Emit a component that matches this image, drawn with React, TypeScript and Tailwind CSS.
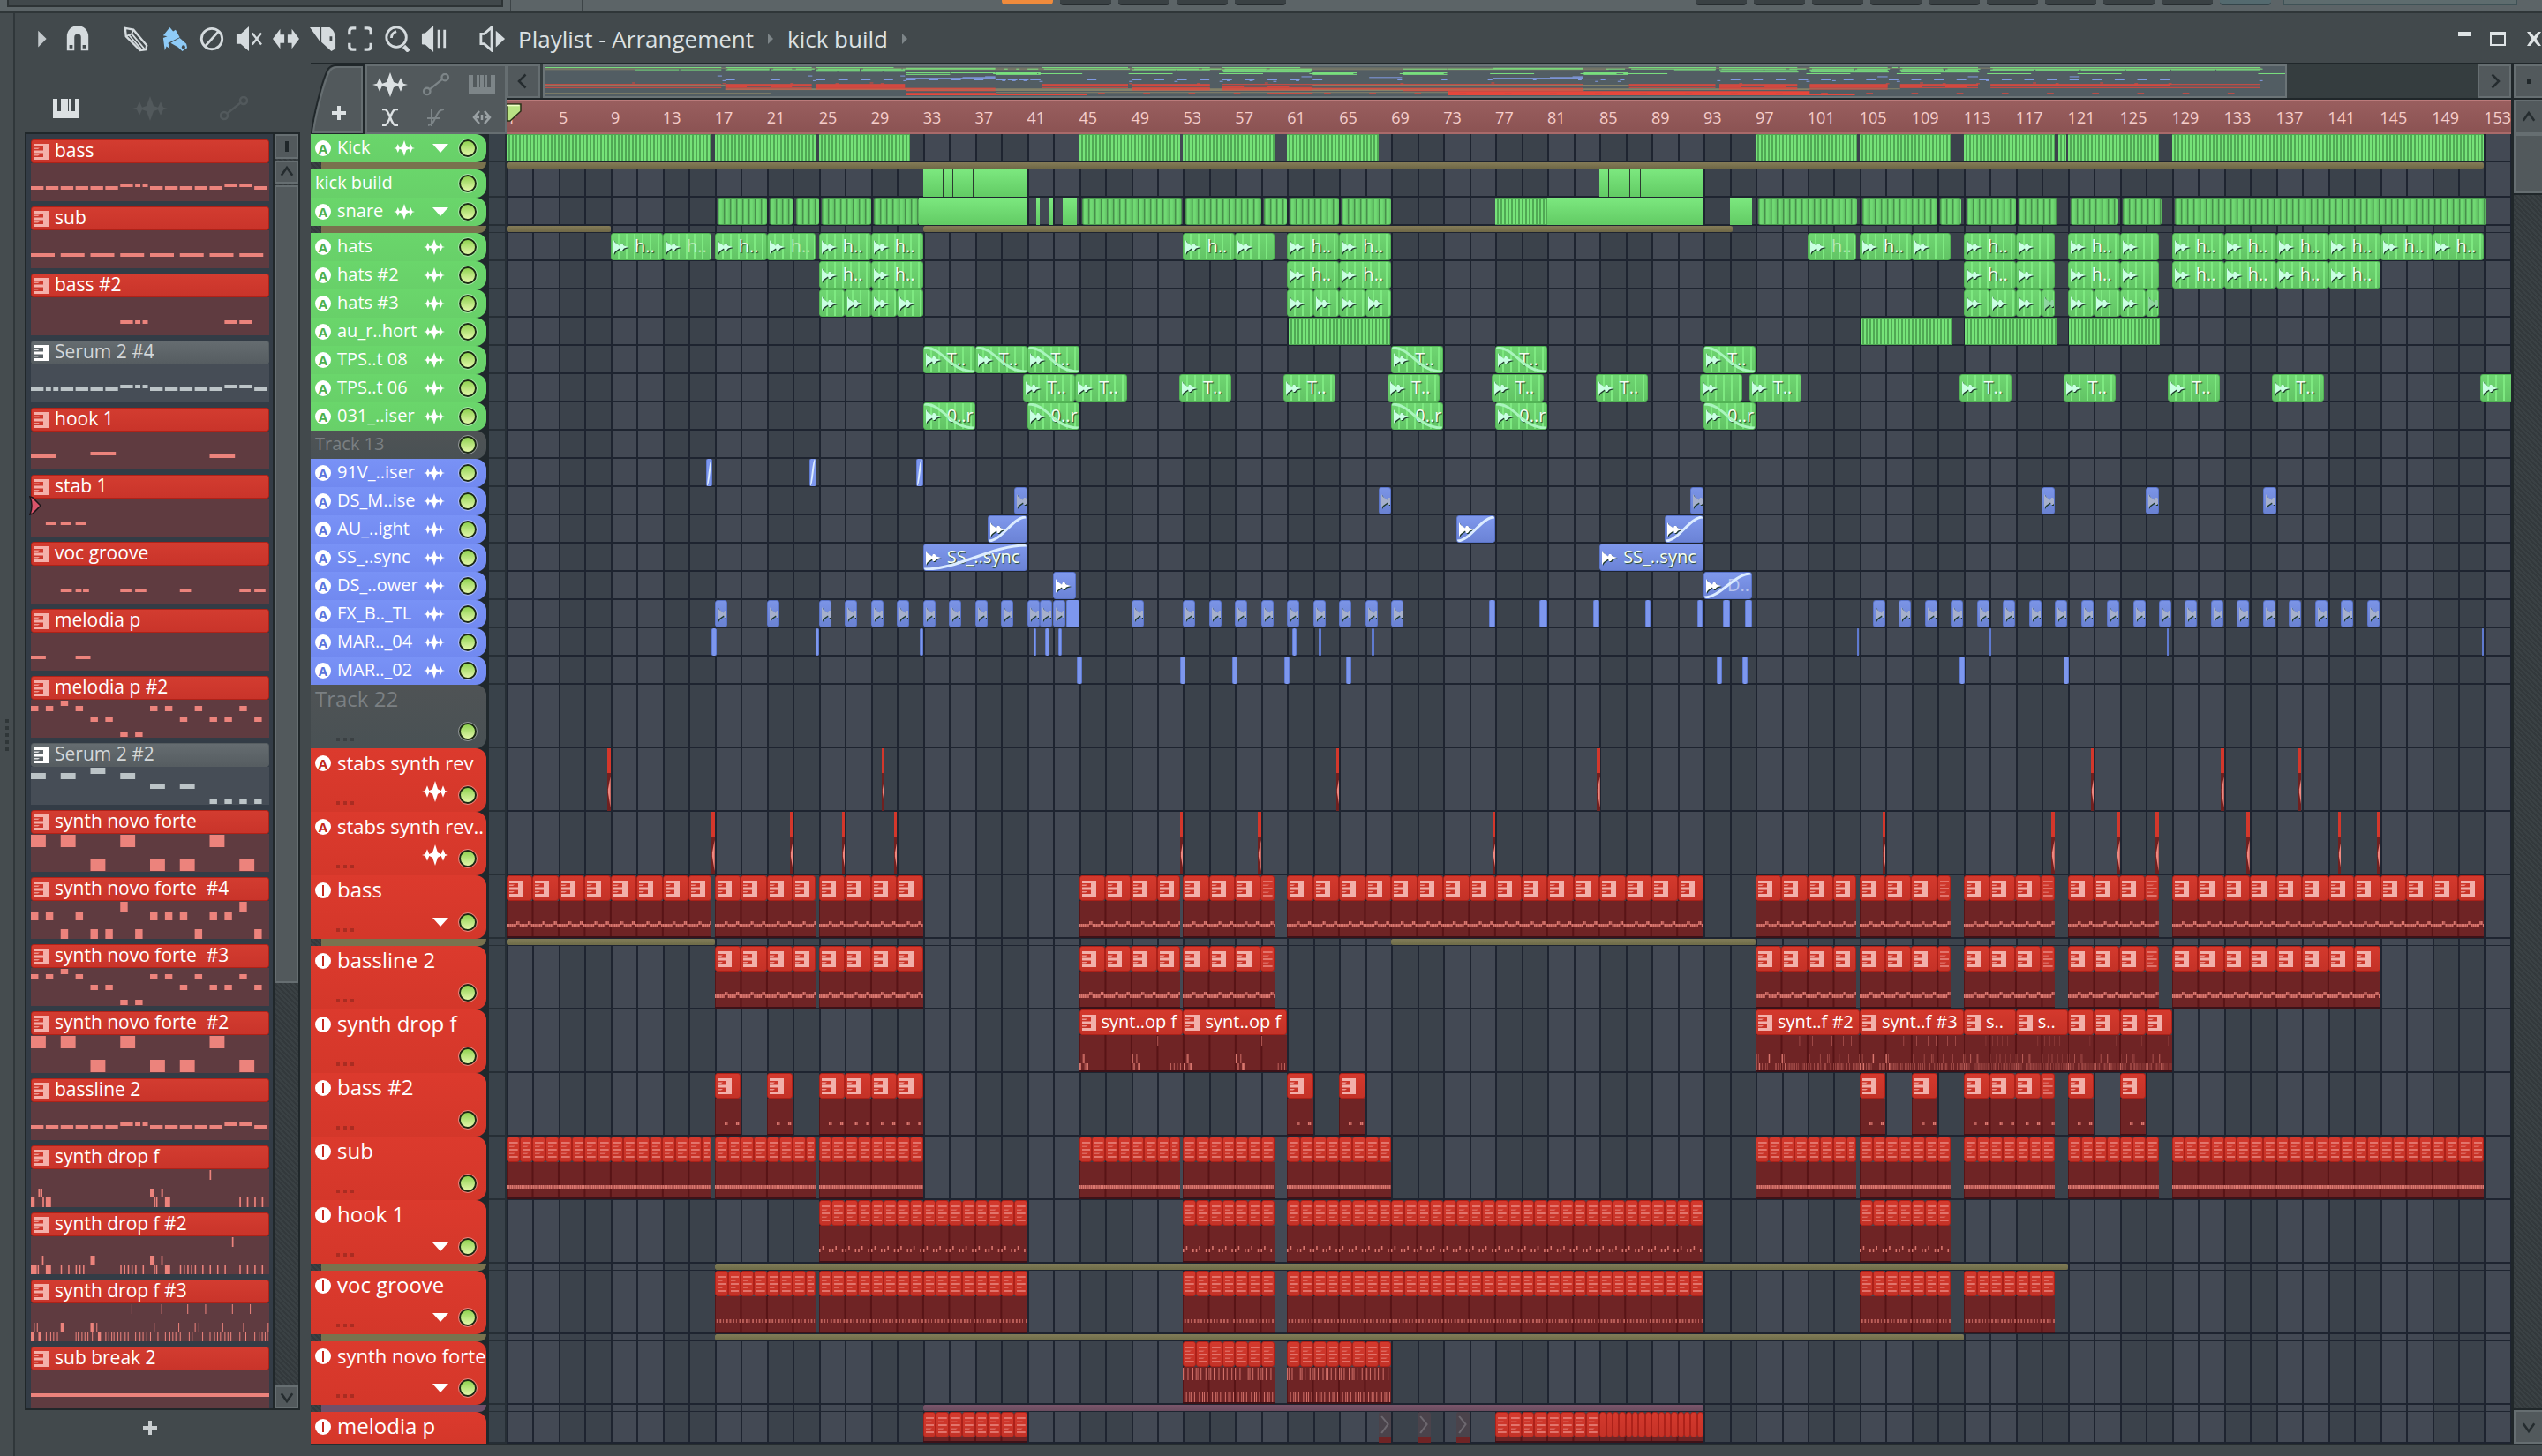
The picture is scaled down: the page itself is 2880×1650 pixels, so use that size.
import React from 'react';
import clsx from 'clsx';

// Number of bars that fit in the visible part of the arrangement
const BARS = 154.07;

type Note = [x: number, y: number, w: number, h: number];
type Range = [from: number, to: number];
type Hue = 'green' | 'blue' | 'red' | 'grey';

interface AudioClip {
  from: number;
  to: number;
  style: 'wave' | 'stripe' | 'hit' | 'solid' | 'slim' | 'short';
  label?: string;
  dim?: boolean;
  fade?: 'in' | 'out';
  cuts?: number[];
}

interface PatternRuns {
  unit: number;
  notes: Note[];
  runs: Range[];
  labels?: string[];
}

interface Automation {
  hue: 'khaki' | 'olive' | 'plum';
  runs: Range[];
}

interface Track {
  name: string;
  hue: Hue;
  type?: 'audio' | 'instrument';
  tall?: boolean;
  cut?: boolean;
  folder?: boolean;
  audio?: AudioClip[];
  slivers?: Range[];
  patterns?: PatternRuns[];
  muted?: number[];
  automation?: Automation;
}

/* ---------- note data ---------- */

const notes = (xs: number[], y: number, w: number, h: number): Note[] => xs.map((x) => [x, y, w, h]);

const BASS: Note[] = [
  ...notes([0, 1, 2, 3, 4, 5, 8, 9, 10, 11, 12, 15], 26, 0.85, 4),
  ...notes([6, 13, 14], 23, 0.85, 4),
  ...notes([7, 7.5], 23, 0.35, 4),
];
const SERUM_4: Note[] = [
  ...notes([0, 2, 3, 4, 5, 8, 9, 10, 11, 12, 15], 26, 0.85, 4),
  ...notes([1, 1.5], 26, 0.35, 4),
  ...notes([6, 13, 14], 23, 0.85, 4),
  ...notes([7, 7.5], 23, 0.35, 4),
];
const SUB: Note[] = notes([0, 2, 4, 6, 8, 10, 12, 14], 26, 1.6, 4);
const BASS_2: Note[] = [...notes([6, 13, 14], 26, 0.85, 4), ...notes([7, 7.5], 26, 0.35, 4)];
const HOOK: Note[] = [[0, 26, 1.7, 4], [4, 23, 1.7, 4], [12, 26, 1.7, 4]];
const STAB: Note[] = notes([1, 2, 3], 26, 0.7, 4);
const VOC: Note[] = [...notes([2, 6, 7, 10, 14, 15], 26, 0.75, 4), ...notes([3, 3.5], 26, 0.4, 4)];
const MELODIA: Note[] = notes([0, 3], 26, 1, 4);
const MELODIA_2: Note[] = [
  ...notes([2], 1, 0.5, 6),
  ...notes([0, 1, 3, 8, 9, 11, 14], 7, 0.5, 6),
  ...notes([4, 5, 10, 12, 13, 15], 19, 0.5, 6),
  ...notes([6, 7], 36, 0.5, 6),
];
const SERUM_2: Note[] = [
  ...notes([4], 1, 1, 7),
  ...notes([0, 2, 6], 7, 1, 7),
  ...notes([8, 10], 19, 1, 6),
  ...notes([12, 13, 14, 15], 36, 0.5, 6),
];
const NOVO: Note[] = [...notes([0, 2, 6, 12], 1, 1, 14), ...notes([4, 8, 10, 14], 28, 1, 14)];
const NOVO_4: Note[] = [
  ...notes([6, 14], 1, 0.5, 11),
  ...notes([0, 1, 3, 8, 9, 10, 12, 13], 12, 0.5, 10),
  ...notes([2, 4, 5, 7, 11, 15], 32, 0.5, 11),
];
const DROP: Note[] = [
  ...notes([12], 1, 0.1, 11),
  ...notes([0.5, 0.65, 8.75], 22, 0.12, 10),
  ...notes([8], 22, 0.25, 10),
  ...notes([0], 32, 0.25, 11),
  ...notes([1, 9], 32, 0.35, 11),
  ...notes([0.78, 8.25, 8.4, 14, 14.5, 15, 15.5], 32, 0.1, 11),
];
const DROP_2: Note[] = [
  ...notes([13.5], 1, 0.1, 11),
  ...notes([0.75, 8.75], 22, 0.1, 10),
  ...notes([4, 8], 22, 0.3, 10),
  ...notes([0, 1, 9], 32, 0.35, 11),
  ...notes([0.3, 0.45, 2, 2.5, 3, 3.25, 3.5, 6, 6.25, 6.5, 6.75, 7, 7.5, 8.25, 8.4, 10, 10.25, 10.5, 10.75, 11, 11.5, 12, 12.5, 13, 14, 14.5, 15, 15.5], 32, 0.09, 11),
];
const DROP_3: Note[] = [
  ...notes([6.75, 8.75, 10.5, 11.7, 13.5, 14.7], 1, 0.06, 11),
  ...notes([0.2, 0.4, 4.4, 8.25, 9.9, 11, 11.25, 12.85, 14.25, 15.9], 22, 0.06, 10),
  ...notes([2, 4], 22, 0.2, 10),
  ...notes([0, 0.5, 4.5], 32, 0.2, 11),
  ...notes([1, 1.3, 1.5, 1.75, 3, 3.15, 3.4, 3.6, 3.8, 4.1, 5, 5.2, 5.4, 5.55, 5.8, 6, 6.3, 6.5, 7, 7.3, 7.5, 7.75, 8, 8.5, 9, 9.3, 9.5, 9.7, 10, 10.6, 10.8, 11.5, 12, 12.3, 12.5, 12.7, 13, 13.2, 13.4, 14, 14.4, 15, 15.3, 15.5, 15.7, 15.85], 32, 0.06, 11),
];
const SUB_BREAK: Note[] = [[0, 26, 16, 4]];

const PICKER: { name: string; notes: Note[]; plain?: boolean; marker?: boolean }[] = [
  { name: 'bass', notes: BASS },
  { name: 'sub', notes: SUB },
  { name: 'bass #2', notes: BASS_2 },
  { name: 'Serum 2 #4', notes: SERUM_4, plain: true },
  { name: 'hook 1', notes: HOOK },
  { name: 'stab 1', notes: STAB, marker: true },
  { name: 'voc groove', notes: VOC },
  { name: 'melodia p', notes: MELODIA },
  { name: 'melodia p #2', notes: MELODIA_2 },
  { name: 'Serum 2 #2', notes: SERUM_2, plain: true },
  { name: 'synth novo forte', notes: NOVO },
  { name: 'synth novo forte  #4', notes: NOVO_4 },
  { name: 'synth novo forte  #3', notes: MELODIA_2 },
  { name: 'synth novo forte  #2', notes: NOVO },
  { name: 'bassline 2', notes: BASS },
  { name: 'synth drop f', notes: DROP },
  { name: 'synth drop f #2', notes: DROP_2 },
  { name: 'synth drop f #3', notes: DROP_3 },
  { name: 'sub break 2', notes: SUB_BREAK },
];

/* ---------- track data ---------- */

const clips = (style: AudioClip['style'], ranges: Range[], extra: Partial<AudioClip> = {}): AudioClip[] =>
  ranges.map(([from, to]) => ({ from, to, style, ...extra }));

const every = (starts: number[], length: number): Range[] => starts.map((s) => [s, s + length]);

const steps = (from: number, to: number, step: number): number[] => {
  const out: number[] = [];
  for (let b = from; b <= to; b += step) out.push(b);
  return out;
};

const TRACKS: Track[] = [
  {
    name: 'Kick',
    hue: 'green',
    type: 'audio',
    folder: true,
    audio: clips('stripe', [[1, 16.75], [17, 24.75], [25, 32], [45, 52.75], [53, 60], [61, 68], [97, 104.8], [105, 112], [113, 120], [120.3, 120.9], [121, 128], [129, 153]]),
    automation: { hue: 'khaki', runs: [[1, 153]] },
  },
  {
    name: 'kick build',
    hue: 'green',
    audio: [
      { from: 33, to: 41, style: 'solid', cuts: [34.5, 35.25, 36.8] },
      { from: 85, to: 93, style: 'solid', cuts: [85.7, 87.3, 88.1] },
    ],
  },
  {
    name: 'snare',
    hue: 'green',
    type: 'audio',
    folder: true,
    audio: [
      ...clips('hit', [[17.2, 21], [21.25, 23], [23.25, 25], [25.2, 29], [29.2, 32.7], [45.2, 52.9], [53.2, 59], [59.2, 61], [61.2, 65], [65.2, 69], [97.2, 104.8], [105.2, 111], [111.2, 112.8], [113.2, 117], [117.2, 120.2], [121.2, 124.9], [125.2, 128.2], [129.2, 153.2]]),
      ...clips('stripe', [[77, 81]]),
      ...clips('solid', [[32.7, 41], [41.7, 42], [42.75, 43], [43.75, 44.8], [81, 93], [95, 96.75]]),
    ],
    automation: { hue: 'khaki', runs: [[1, 9], [33, 95.2]] },
  },
  {
    name: 'hats',
    hue: 'green',
    type: 'audio',
    audio: [
      ...clips('wave', every([9, 17, 25, 29, 53, 61, 65, 105, 113, 121, ...steps(129, 149, 4)], 4), { label: 'h..' }),
      ...clips('wave', [[13, 16.75], [21, 24.75], [101, 104.75]], { label: 'h..', dim: true }),
      ...clips('wave', every([57, 109, 117, 125], 3)),
    ],
  },
  {
    name: 'hats #2',
    hue: 'green',
    type: 'audio',
    audio: [
      ...clips('wave', every([25, 29, 61, 65, 113, 121, ...steps(129, 141, 4)], 4), { label: 'h..' }),
      ...clips('wave', every([117, 125], 3)),
    ],
  },
  {
    name: 'hats #3',
    hue: 'green',
    type: 'audio',
    audio: [
      ...clips('wave', every([25, 27, 29, 31, 61, 63, 65, 67, 113, 115, 117, 121, 123, 125], 2)),
      ...clips('short', [[119, 120], [127, 128]]),
    ],
  },
  {
    name: 'au_r..hort',
    hue: 'green',
    type: 'audio',
    audio: clips('stripe', [[61.1, 68.9], [105.1, 112.1], [113.1, 120.1], [121.1, 128.1]]),
  },
  {
    name: 'TPS..t 08',
    hue: 'green',
    type: 'audio',
    audio: clips('wave', every([33, 37, 41, 69, 77, 93], 4), { label: 'T..', fade: 'out' }),
  },
  {
    name: 'TPS..t 06',
    hue: 'green',
    type: 'audio',
    audio: [
      ...clips('wave', every([40.7, 44.7, 52.7, 60.7, 68.7, 76.7, 84.7, 96.5, 112.7, 120.7, 128.7, 136.7], 4), { label: 'T..' }),
      ...clips('wave', [[92.7, 96], [152.7, 156]]),
    ],
  },
  {
    name: '031_..iser',
    hue: 'green',
    type: 'audio',
    audio: clips('wave', every([33, 41, 69, 77, 93], 4), { label: '0..r', fade: 'out' }),
  },
  { name: 'Track 13', hue: 'grey' },
  {
    name: '91V_..iser',
    hue: 'blue',
    type: 'audio',
    audio: clips('slim', [[16.3, 16.8], [24.3, 24.8], [32.5, 33]], { fade: 'in' }),
  },
  {
    name: 'DS_M..ise',
    hue: 'blue',
    type: 'audio',
    audio: clips('short', every([40, 68, 92, 119, 127, 136], 1)),
  },
  {
    name: 'AU_..ight',
    hue: 'blue',
    type: 'audio',
    audio: clips('wave', every([38, 74, 90], 3), { fade: 'in' }),
  },
  {
    name: 'SS_..sync',
    hue: 'blue',
    type: 'audio',
    audio: [
      { from: 33, to: 41, style: 'wave', label: 'SS_..sync', fade: 'in' },
      { from: 85, to: 93, style: 'wave', label: 'SS_..sync' },
    ],
  },
  {
    name: 'DS_..ower',
    hue: 'blue',
    type: 'audio',
    audio: [
      { from: 43, to: 44.75, style: 'wave' },
      { from: 93, to: 96.7, style: 'wave', label: 'D..', dim: true, fade: 'in' },
    ],
  },
  {
    name: 'FX_B.._TL',
    hue: 'blue',
    type: 'audio',
    audio: [
      ...clips('short', every([17, 21, 25, 27, 29, 31, 33, 35, 37, 39, 41, 42, 43, 49, ...steps(53, 69, 2), ...steps(106, 144, 2)], 0.95)),
      ...clips('slim', [[44, 45], [76.5, 77], [80.4, 81], [84.5, 85], [88.5, 88.9], [92.5, 92.9], [94.5, 95], [96.2, 96.7]]),
    ],
  },
  {
    name: 'MAR.._04',
    hue: 'blue',
    type: 'audio',
    audio: clips('slim', [[16.75, 17.15], [24.75, 25], [32.75, 33], [41.5, 41.7], [42.4, 42.7], [43.4, 43.7], [61.4, 61.7], [63.4, 63.6], [67.5, 67.7], [104.8, 104.9], [115, 115.1], [128.6, 128.7], [152.8, 152.9]]),
  },
  {
    name: 'MAR.._02',
    hue: 'blue',
    type: 'audio',
    audio: clips('slim', every([44.8, 52.75, 56.75, 60.75, 65.5, 94, 96, 112.7, 120.7], 0.4)),
  },
  { name: 'Track 22', hue: 'grey', tall: true },
  {
    name: 'stabs synth rev',
    hue: 'red',
    type: 'audio',
    tall: true,
    slivers: every([8.75, 29.8, 64.75, 84.8, 122.75, 132.75, 138.7], 0.25),
  },
  {
    name: 'stabs synth rev..',
    hue: 'red',
    type: 'audio',
    tall: true,
    slivers: every([16.75, 22.75, 26.75, 30.75, 52.75, 58.75, 76.75, 106.75, 119.75, 124.75, 127.75, 134.75, 141.75, 144.75], 0.25),
  },
  {
    name: 'bass',
    hue: 'red',
    type: 'instrument',
    tall: true,
    folder: true,
    patterns: [{ unit: 2, notes: BASS, runs: [[1, 16.75], [17, 24.75], [25, 33], [45, 52.75], [53, 60], [61, 93], [97, 104.75], [105, 112], [113, 120], [121, 128], [129, 153]] }],
    automation: { hue: 'olive', runs: [[1, 17], [69, 97]] },
  },
  {
    name: 'bassline 2',
    hue: 'red',
    type: 'instrument',
    tall: true,
    patterns: [{ unit: 2, notes: BASS, runs: [[17, 24.75], [25, 33], [45, 52.75], [53, 60], [97, 104.75], [105, 112], [113, 120], [121, 128], [129, 145]] }],
  },
  {
    name: 'synth drop f',
    hue: 'red',
    type: 'instrument',
    tall: true,
    patterns: [
      { unit: 8, notes: DROP, runs: [[45, 61]], labels: ['synt..op f', 'synt..op f'] },
      { unit: 8, notes: DROP_3, runs: [[97, 113]], labels: ['synt..f #2', 'synt..f #3'] },
      { unit: 4, notes: DROP_3, runs: [[113, 121]], labels: ['s..', 's..'] },
      { unit: 2, notes: DROP_2, runs: [[121, 129]] },
    ],
  },
  {
    name: 'bass #2',
    hue: 'red',
    type: 'instrument',
    tall: true,
    patterns: [{ unit: 2, notes: BASS_2, runs: [[17, 19], [21, 23], [25, 33], [61, 63], [65, 67], [105, 107], [109, 111], [113, 120], [121, 123], [125, 127]] }],
  },
  {
    name: 'sub',
    hue: 'red',
    type: 'instrument',
    tall: true,
    patterns: [{ unit: 1, notes: SUB, runs: [[1, 16.75], [17, 24.75], [25, 33], [45, 52.75], [53, 60], [61, 69], [97, 104.75], [105, 112], [113, 120], [121, 128], [129, 153]] }],
  },
  {
    name: 'hook 1',
    hue: 'red',
    type: 'instrument',
    tall: true,
    folder: true,
    patterns: [{ unit: 1, notes: HOOK, runs: [[25, 41], [53, 60], [61, 93], [105, 112]] }],
    automation: { hue: 'olive', runs: [[17, 121]] },
  },
  {
    name: 'voc groove',
    hue: 'red',
    type: 'instrument',
    tall: true,
    folder: true,
    patterns: [{ unit: 1, notes: VOC, runs: [[17, 24.75], [25, 41], [53, 60], [61, 93], [105, 112], [113, 120]] }],
    automation: { hue: 'olive', runs: [[17, 113]] },
  },
  {
    name: 'synth novo forte',
    hue: 'red',
    type: 'instrument',
    tall: true,
    folder: true,
    patterns: [{ unit: 1, notes: NOVO, runs: [[53, 60], [61, 69]] }],
    automation: { hue: 'plum', runs: [[33, 93]] },
  },
  {
    name: 'melodia p',
    hue: 'red',
    type: 'instrument',
    tall: true,
    cut: true,
    patterns: [
      { unit: 1, notes: MELODIA, runs: [[33, 41], [77, 85]] },
      { unit: 0.5, notes: MELODIA, runs: [[85, 93]] },
    ],
    muted: [68, 71, 74],
  },
];

const left = (bar: number) => `${((bar - 1) / BARS) * 100}%`;
const width = (from: number, to: number) => `${((to - from) / BARS) * 100}%`;

/* ---------- icons ---------- */

const WAVE = 'M0 18 5 16.5 8 8 11 16.5 16 14 20 0 24 14 29 16.5 32 8 35 16.5 40 18 35 19.5 32 28 29 19.5 24 22 20 36 16 22 11 19.5 8 28 5 19.5Z';

function WaveIcon({ className }: { className?: string }) {
  return (
    <svg viewBox="0 0 40 36" preserveAspectRatio="none" className={className} fill="currentColor">
      <path d={WAVE} />
    </svg>
  );
}

function LinkIcon({ className }: { className?: string }) {
  return (
    <svg viewBox="0 0 32 28" className={className} fill="none" stroke="currentColor" strokeWidth="2.5">
      <circle cx="5" cy="22" r="4" />
      <circle cx="27" cy="5" r="4" />
      <path d="M8.5 19.5 23.5 7.5" />
    </svg>
  );
}

function PianoIcon({ className }: { className?: string }) {
  return (
    <svg viewBox="0 0 30 22" preserveAspectRatio="none" className={className} fill="currentColor">
      <path d="M0 0h5v14h4V0h3v14h1V0h4v14h1V0h3v14h4V0h5v22H0Z" />
    </svg>
  );
}

function KeysIcon({ className }: { className?: string }) {
  return (
    <svg viewBox="0 0 16 18" className={className} fill="currentColor">
      <path d="M0 0h16v18H0v-3h10v-4.5H0v-3h10V3H0Z" />
      <path d="M0 4.5h6l-2 1.500H0ZM0 12h6l-2 1.500H0Z" opacity="0.8" />
    </svg>
  );
}

function NarrowKeysIcon() {
  return (
    <svg viewBox="0 0 10 18" preserveAspectRatio="none" className="h-[18px] w-full pl-[2px] pr-px" fill="#e98a82">
      <path d="M0 0h10v2H0ZM0 8h10v2H0ZM0 16h10v2H0Z" opacity="0.75" />
      <path d="M0 4.5h7l-2 1.5H0ZM0 12.5h7l-2 1.5H0Z" opacity="0.6" />
    </svg>
  );
}

function SampleIcon({ className }: { className?: string }) {
  return (
    <svg viewBox="0 0 17 16" className={className} fill="currentColor">
      <path d="M0 0 2 3 7 6.5 8 4 10 4 12 6.5 17 8 12 9.5 10 12 8 12 7 9.5 2 13 0 16Z" />
    </svg>
  );
}

function ChevronIcon({ d }: { d: string }) {
  return (
    <svg viewBox="0 0 16 16" className="size-5" fill="none" stroke="#252c2f" strokeWidth="2">
      <path d={d} />
    </svg>
  );
}

const UP = 'M3 11 8 4l5 7';
const DOWN = 'M3 5l5 7 5-7';

const TOOLS: { name: string; at: string; art: React.ReactNode }[] = [
  { name: 'Menu', at: 'w-9', art: <path d="M12 6 22 16 12 26Z" fill="#c3c9cc" /> },
  { name: 'Snap', at: 'w-[46px]', art: <path d="M3 30V13a13 13 0 0 1 26 0v17h-9V14a4 4 0 0 0-8 0v16ZM6 23.500v4h4v-4Zm16 0v4h4v-4Z" fill="#d5dbde" fillRule="evenodd" /> },
  { name: 'Draw', at: 'ml-5 w-[46px]', art: <g fill="none" stroke="#d5dbde" strokeWidth="2.500"><path d="M3 3 13 5 29 24 28 29 21 30 4 13Z" /><path d="M4 13 11 10 13 5M11 10 26 28M8 12 22 28" strokeWidth="2" /></g> },
  { name: 'Paint', at: 'w-[42px]', art: <g fill="#8ecbf7"><path d="M10 2 14 7 17 5 22 14 8 21 10 28 6 25 4 30 2 15 7 13 2 12Z" /><path d="M22 15 11 21 20 26 25 31 31 27 30 22Z" /><circle cx="26.500" cy="26" r="2.200" fill="#42494c" /></g> },
  { name: 'Delete', at: 'w-[42px]', art: <g fill="none" stroke="#d5dbde" strokeWidth="3"><circle cx="16" cy="16" r="12.500" /><path d="M8 25 24 7" /></g> },
  { name: 'Mute', at: 'w-[42px]', art: <g fill="#d5dbde"><path d="M1 10h5L16 1v30L6 22H1Z" /><path d="M20 9 31 23M31 9 20 23" stroke="#d5dbde" strokeWidth="2.500" /></g> },
  { name: 'Slip', at: 'w-[42px]', art: <path d="M0 16 9 4v7h5v10H9v7ZM32 16 23 4v7h-5v10h5v7Z" fill="#d5dbde" /> },
  { name: 'Slice', at: 'w-[42px]', art: <path d="M0 2h12v17ZM14 2h10q7 5 7 13v13l-5 3-12-11ZM24 13v5h3v-5Z" fill="#d5dbde" fillRule="evenodd" /> },
  { name: 'Select', at: 'w-[42px]', art: <path d="M3 11V7q0-4 4-4h4M21 3h4q4 0 4 4v4M29 21v4q0 4-4 4h-4M11 29H7q-4 0-4-4v-4" fill="none" stroke="#d5dbde" strokeWidth="3.500" /> },
  { name: 'Zoom', at: 'w-[42px]', art: <g fill="none" stroke="#d5dbde"><circle cx="15" cy="14" r="12" strokeWidth="3" /><path d="M9 15q0-6 6-8" strokeWidth="3" /><path d="M24 25 30 31" strokeWidth="5" /></g> },
  { name: 'Playback', at: 'w-[42px]', art: <g fill="#d5dbde"><path d="M1 10q0-1 4-1L15 0v32L5 23q-4 0-4-1Z" /><path d="M20 5h3v22h-3ZM27 5h3v22h-3Z" /></g> },
  { name: 'Options', at: 'ml-5 w-[50px]', art: <g fill="#d5dbde"><path d="M2 10h4L15 2v28L6 22H2Z" fill="none" stroke="#d5dbde" strokeWidth="3" /><path d="M20 6 31 16 20 26Z" /></g> },
];

/* ---------- window chrome ---------- */

function ToolbarStrip() {
  return (
    <div className="flex h-[15px] items-start overflow-hidden border-b-2 border-[#2f3638] bg-[#5c6467]">
      <div className="ml-2 h-2 w-[562px] border-2 border-t-0 border-[#2d3335] bg-[#41484b]" />
      <div className="ml-2 h-full w-px bg-[#3d4447]" />
      <div className="ml-20 h-full w-px bg-[#3d4447]" />
      <div className="flex-1" />
      <div className="flex gap-2">
        <div className="h-[5px] w-[58px] rounded-b bg-[#f08b3c]" />
        {[1, 2, 3, 4].map((i) => (
          <div key={i} className="h-[6px] w-[58px] rounded-b border-b-2 border-[#272d30] bg-[#3a4144]" />
        ))}
      </div>
      <div className="ml-[455px] h-full w-px bg-[#3d4447]" />
      <div className="ml-2 flex gap-2">
        {[1, 2, 3, 4, 5, 6, 7, 8, 9].map((i) => (
          <div key={i} className="h-[6px] w-[58px] rounded-b border-b-2 border-[#272d30] bg-[#3a4144]" />
        ))}
        <div className="h-[6px] w-[58px] rounded-b border-b-2 border-[#34454a] bg-[#546a6f]" />
      </div>
      <div className="ml-1 h-full w-px bg-[#3d4447]" />
      <div className="ml-2 mr-7 h-[6px] w-[266px] border-2 border-t-0 border-[#3f5256] bg-[#5e6c6e]" />
    </div>
  );
}

function TitleBar() {
  return (
    <header className="flex h-14 items-center pl-3 pt-[2px]">
      <nav className="flex items-center">
        {TOOLS.map((tool) => (
          <button key={tool.name} aria-label={tool.name} className={clsx('flex justify-center', tool.at)}>
            <svg viewBox="0 0 32 32" className="size-[30px]">
              {tool.art}
            </svg>
          </button>
        ))}
      </nav>
      <h1 className="ml-1 flex items-center gap-4 text-[26px] leading-8 text-[#dce1e3]">
        <span>Playlist - Arrangement</span>
        <span className="h-0 w-0 border-y-[6px] border-l-[6px] border-y-transparent border-l-[#7d8588]" />
        <span>kick build</span>
        <span className="h-0 w-0 border-y-[6px] border-l-[6px] border-y-transparent border-l-[#7d8588]" />
      </h1>
      <div className="ml-auto flex h-4 items-start gap-[22px] overflow-hidden">
        <button aria-label="Minimize" className="h-[5px] w-[14px] bg-[#dfe4e6]" />
        <button aria-label="Maximize" className="h-4 w-[18px] border-2 border-t-4 border-[#dfe4e6]" />
        <button aria-label="Close" className="-mr-px h-4 w-5">
          <svg viewBox="0 0 20 18" className="h-4 w-5">
            <path d="M1 0h4l5 6 5-6h4l-6 9 6 9h-4l-5-6-5 6H1l6-9Z" fill="#dfe4e6" />
          </svg>
        </button>
      </div>
    </header>
  );
}

/* ---------- picker ---------- */

const notesPath = (list: Note[], repeat: number) => {
  let d = '';
  for (let r = 0; r < repeat; r++) {
    for (const [x, y, w, h] of list) d += `M${x + r * 16} ${y}h${w}v${h}h${-w}Z`;
  }
  return d;
};

function PickerItem({ name, notes: list, plain, marker }: (typeof PICKER)[number]) {
  return (
    <li className="relative h-[70px]">
      <button
        className={clsx(
          'flex h-[27px] w-full items-center gap-[7px] whitespace-pre rounded-[3px] border pb-[3px] pl-[3px] text-left text-[21px] leading-6',
          plain
            ? 'border-[#565d61] bg-gradient-to-b from-[#656c70] to-[#565d61] text-[#d3d7d9]'
            : 'border-[#b02218] bg-gradient-to-b from-[#d33c30] to-[#c9342a] text-white'
        )}
      >
        <KeysIcon className={clsx('mt-[3px] h-[18px] w-4', plain ? 'text-white' : 'text-[#f4b0aa]')} />
        <span>{name}</span>
      </button>
      <svg
        viewBox="0 0 16 43"
        preserveAspectRatio="none"
        className={clsx('h-[43px] w-full', plain ? 'bg-[#464d56] text-[#bcc4c7]' : 'bg-[#5f3b40] text-[#ec837c]')}
      >
        <path d={notesPath(list, 1)} fill="currentColor" />
      </svg>
      {marker && (
        <svg viewBox="0 0 14 22" className="absolute -left-[2px] top-6 h-[22px] w-[14px]">
          <path d="M1 1q4 10 0 20L4 20 13 11 4 2Z" fill="#d9546a" stroke="#1c1519" strokeWidth="1.500" />
        </svg>
      )}
    </li>
  );
}

const HATCH = 'bg-[repeating-linear-gradient(45deg,#33393c_0_2px,#3a4144_2px_4px)]';

function Picker() {
  return (
    <aside className="flex w-[335px] flex-col pl-[11px]">
      <div className="flex h-[79px] items-center pb-0 pl-3 pt-6 text-[#52595c]">
        <button aria-label="Patterns" className="flex w-[70px] justify-center text-[#dce1e3]">
          <PianoIcon className="h-[22px] w-[30px]" />
        </button>
        <button aria-label="Audio clips" className="flex w-[120px] justify-center">
          <WaveIcon className="h-7 w-10" />
        </button>
        <button aria-label="Automation clips" className="flex w-[70px] justify-center">
          <LinkIcon className="h-7 w-8" />
        </button>
      </div>
      <div className="flex w-[312px] border-2 border-[#20272a] bg-[#333c46]">
        <ul className="flex flex-1 flex-col gap-[6px] pl-[5px] pr-1 pt-[6px]">
          {PICKER.map((item) => (
            <PickerItem key={item.name} {...item} />
          ))}
        </ul>
        <div className={clsx('flex w-[29px] flex-col gap-[2px] border-l-2 border-[#20272a]', HATCH)}>
          <button aria-label="Picker size" className="flex h-7 items-center justify-center border-2 border-[#666e71] bg-[#52595c]">
            <span className="h-3 w-1 bg-[#20272a]" />
          </button>
          <button aria-label="Scroll up" className="flex h-[26px] items-center justify-center border-2 border-[#666e71] bg-[#52595c]">
            <ChevronIcon d={UP} />
          </button>
          <div className="h-[904px] border-2 border-[#666e71] bg-[#52595c]" />
          <button aria-label="Scroll down" className="mt-auto flex h-[26px] items-center justify-center border-2 border-[#666e71] bg-[#52595c]">
            <ChevronIcon d={DOWN} />
          </button>
        </div>
      </div>
      <button aria-label="Add pattern" className="mt-3 flex w-[284px] justify-center">
        <svg viewBox="0 0 16 16" className="size-4">
          <path d="M6 0h4v6h6v4h-6v6H6v-6H0V6h6Z" fill="#c9ced0" />
        </svg>
      </button>
    </aside>
  );
}

/* ---------- arrangement header ---------- */

function CornerPanel() {
  return (
    <div className="flex h-full w-[222px] gap-[2px] bg-[#20272a]">
      <button aria-label="Add track" className="relative flex w-[60px] items-end justify-center bg-[#42494c] pb-4">
        <svg viewBox="0 0 60 80" preserveAspectRatio="none" className="absolute inset-0 h-full w-full">
          <path d="M1 80C2 62 14 14 20 5Q23 1 29 1H59V79H1Z" fill="#52595c" stroke="#20272a" strokeWidth="2" />
          <path d="M3 78C5 60 16 16 22 7Q25 3 30 3H58V78Z" fill="none" stroke="#666e71" strokeWidth="2" />
        </svg>
        <svg viewBox="0 0 16 16" className="relative ml-1 size-4">
          <path d="M6 0h4v6h6v4h-6v6H6v-6H0V6h6Z" fill="#dce1e3" />
        </svg>
      </button>
      <div className="grid flex-1 grid-cols-3 place-items-center border-2 border-[#666e71] bg-[#52595c] text-[#7d8588]">
        <button aria-label="Show audio" className="text-[#dce1e3]">
          <WaveIcon className="h-7 w-10" />
        </button>
        <button aria-label="Show automation">
          <LinkIcon className="h-[26px] w-8" />
        </button>
        <button aria-label="Show patterns">
          <PianoIcon className="h-[22px] w-[30px]" />
        </button>
        <button aria-label="Crossfade" className="text-[#dce1e3]">
          <svg viewBox="0 0 20 20" className="size-5" fill="none" stroke="currentColor" strokeWidth="2.500">
            <path d="M1 1h3c5 0 7 18 12 18h3M19 1h-3c-5 0-7 18-12 18H1" />
          </svg>
        </button>
        <button aria-label="Curve">
          <svg viewBox="0 0 20 20" className="size-5" fill="none" stroke="currentColor" strokeWidth="2">
            <path d="M5 0v20M0 11h14M1 19c9 0 8-18 18-18" />
          </svg>
        </button>
        <button aria-label="Stretch" className="text-[#9aa1a4]">
          <svg viewBox="0 0 22 16" className="h-4 w-[22px]" fill="none" stroke="currentColor" strokeWidth="2.500">
            <path d="M8 1 2 8l6 7M14 1l6 7-6 7M4 8h4M14 8h4M11 5v6" />
          </svg>
        </button>
      </div>
    </div>
  );
}

const MAP_FILL: Record<Hue, string> = { green: '#7dea80', blue: '#859fec', red: '#e5473c', grey: '#777777' };

function Minimap() {
  return (
    <svg
      viewBox={`0 0 ${BARS} 36`}
      preserveAspectRatio="none"
      className="h-full w-full border-2 border-[#6b7477] bg-[#525d63]"
    >
      {TRACKS.map((track, i) => {
        const y = 1 + i * 0.93;
        const ranges: Range[] = [
          ...(track.audio ?? []).map((c): Range => [c.from, c.to]),
          ...(track.slivers ?? []),
          ...(track.patterns ?? []).flatMap((p) => p.runs),
        ];
        return (
          <g key={i}>
            {track.automation?.runs.map(([a, b]) => (
              <rect key={a} x={a - 1} y={y + 0.8} width={b - a} height="0.8" fill="#968f6c" />
            ))}
            {ranges.map(([a, b], n) => (
              <rect key={n} x={a - 1} y={y} width={Math.max(b - a - 0.1, 0.3)} height="1" fill={MAP_FILL[track.hue]} />
            ))}
          </g>
        );
      })}
      {/* tracks below the visible area */}
      <path d="M0 32h20v1.500H0ZM60 31h44v1H60ZM40 31h50v1H40Z" fill="#968f6c" opacity="0.8" />
      <path d="M32 32h8v1.500h-8ZM32 34h16v1H32ZM64 32h4v1h-4ZM80 30h32v3H80ZM80 34h32v1H80ZM112 34h4v1h-4Z" fill="#e5473c" />
      {steps(49, 150, 4).map((b) => (
        <rect key={b} x={b} y="32" width="0.6" height="1" fill="#d5493f" />
      ))}
    </svg>
  );
}

function Ruler() {
  return (
    <div className="relative flex h-[39px] items-center overflow-hidden border-b-2 border-t-2 border-b-[#a96a6a] border-t-[#bb7b7b] bg-gradient-to-b from-[#995e5e] to-[#8b5353] text-lg text-[#f6cdca]">
      {steps(1, 153, 4).map((bar) => (
        <span key={bar} className="shrink-0" style={{ width: width(bar, Math.min(bar + 4, BARS + 1)) }}>
          {bar}
        </span>
      ))}
      <svg viewBox="0 0 18 22" className="absolute left-0 top-[2px] h-[22px] w-[18px]">
        <path d="M0 1h16v8L4 20H0Z" fill="#b9e384" stroke="#2a3118" strokeWidth="1.500" />
        <path d="M0 2.500h14.500" stroke="#f1ffc9" strokeWidth="1.500" />
      </svg>
    </div>
  );
}

function ArrangementHeader() {
  return (
    <div className="flex h-[81px] border-t-2 border-[#20272a]">
      <CornerPanel />
      <div className="flex min-w-0 flex-1 flex-col">
        <div className="flex h-10 items-stretch border-b-2 border-[#20272a] bg-[#353d3f]">
          <button aria-label="Scroll left" className="flex w-[38px] items-center justify-center border-2 border-[#666e71] bg-[#52595c]">
            <ChevronIcon d="M10 2 4 8l6 6" />
          </button>
          <div className="ml-[3px] w-[87%]">
            <Minimap />
          </div>
          <button aria-label="Scroll right" className="ml-auto flex w-[38px] items-center justify-center border-2 border-[#666e71] bg-[#52595c]">
            <ChevronIcon d="M6 2l6 6-6 6" />
          </button>
        </div>
        <Ruler />
      </div>
      <div className="flex w-[35px] flex-col gap-[2px] bg-[#20272a] pl-[3px]">
        <button aria-label="Zoom level" className="flex h-[38px] items-center justify-center border-2 border-r-0 border-[#666e71] bg-[#52595c]">
          <span className="h-[6px] w-1 bg-[#20272a]" />
        </button>
        <button aria-label="Scroll up" className="flex flex-1 items-center justify-center border-2 border-r-0 border-[#666e71] bg-[#52595c]">
          <ChevronIcon d={UP} />
        </button>
      </div>
    </div>
  );
}

/* ---------- tracks ---------- */

const HEADER_BG: Record<Hue, string> = {
  green: 'bg-gradient-to-b from-[#6ad66b] to-[#68d069] text-white',
  blue: 'bg-gradient-to-b from-[#7992f6] to-[#7189f0] text-white',
  red: 'bg-gradient-to-b from-[#dc3a2d] to-[#d4372a] text-white',
  grey: 'bg-gradient-to-b from-[#4f5355] to-[#495154] text-[#7b8083]',
};

const BADGE_TEXT: Record<Hue, string> = {
  green: 'text-[#4caf50]',
  blue: 'text-[#5a74dc]',
  red: 'text-[#c2281d]',
  grey: 'text-[#555555]',
};

const LANE_FILL: Record<Automation['hue'], string> = {
  khaki: 'bg-gradient-to-b from-[#857c58] to-[#6f6846]',
  olive: 'bg-gradient-to-b from-[#817c58] to-[#6e6c48]',
  plum: 'bg-gradient-to-b from-[#7b566b] to-[#6b4d60]',
};

// bars: thin line every two, alternate shade every four
const GRID =
  'bg-[repeating-linear-gradient(90deg,#1e2430_0_2px,transparent_2px_1.29811%),repeating-linear-gradient(90deg,#434954_0_2.59622%,#3b424b_2.59622%_5.19244%)]';

function Badge({ track }: { track: Track }) {
  if (!track.type) return null;
  return (
    <span
      className={clsx(
        'flex size-[18px] shrink-0 items-center justify-center rounded-full bg-white text-[15px] font-bold leading-none',
        BADGE_TEXT[track.hue]
      )}
    >
      {track.type === 'audio' ? 'A' : <span className="h-3 w-[2px] bg-current" />}
    </span>
  );
}

function Led({ name }: { name: string }) {
  return (
    <button
      aria-label={`Mute ${name}`}
      className="size-5 shrink-0 rounded-full border-2 border-[#1c2a14] bg-gradient-to-b from-[#8fd24e] to-[#e2f7a8] outline outline-1 outline-white/40"
    />
  );
}

function Fold() {
  return <span className="-mr-1 ml-1 h-0 w-0 border-x-[9px] border-t-[10px] border-x-transparent border-t-white" />;
}

function TrackHeader({ track }: { track: Track }) {
  if (!track.tall) {
    return (
      <div className={clsx('flex h-8 w-[199px] items-center rounded-r-xl pl-[5px] pr-[11px]', HEADER_BG[track.hue])}>
        <Badge track={track} />
        <span className={clsx('whitespace-nowrap pb-[2px] text-xl leading-7', track.type && 'ml-[7px]')}>{track.name}</span>
        <div className="ml-auto flex items-center gap-4">
          {track.type && <WaveIcon className="h-[18px] w-6" />}
          {track.folder && <Fold />}
          <Led name={track.name} />
        </div>
      </div>
    );
  }
  return (
    <div
      className={clsx(
        'w-[199px] overflow-hidden pl-[5px] pr-[11px]',
        track.cut ? 'h-9 rounded-tr-xl' : 'h-[72px] rounded-r-xl',
        HEADER_BG[track.hue]
      )}
    >
      <div className="flex h-[34px] items-center">
        <Badge track={track} />
        <span
          className={clsx(
            'whitespace-nowrap pb-[2px] leading-7',
            track.name.length > 12 ? 'text-[22px]' : 'text-2xl',
            track.type && 'ml-[7px]'
          )}
        >
          {track.name}
        </span>
      </div>
      {!track.cut && (
        <div className="flex h-[38px] items-center gap-4">
          <div className="mb-2 ml-6 mr-auto flex gap-1 self-end">
            {[1, 2, 3].map((i) => (
              <span key={i} className="size-1 bg-black/20" />
            ))}
          </div>
          {track.type === 'audio' && <WaveIcon className="-mr-1 mb-2 h-6 w-[30px]" />}
          {track.folder && <Fold />}
          <Led name={track.name} />
        </div>
      )}
    </div>
  );
}

const CLIP_FILL: Record<'green' | 'blue', Record<AudioClip['style'], string>> = {
  green: {
    wave: 'rounded-[3px] border border-[#52b355] bg-[repeating-linear-gradient(90deg,transparent_0_7px,#7ee981_7px_9px),linear-gradient(#6fd672,#62c465)] text-[#c9ffe2]',
    short: 'rounded-[3px] border border-[#52b355] bg-[repeating-linear-gradient(90deg,transparent_0_5px,#79e47c_5px_7px),linear-gradient(#6fd672,#62c465)] text-[#8fd6a0]',
    stripe: 'border-y border-[#4fa653] bg-[repeating-linear-gradient(90deg,#76e379_0_2px,#50a854_2px_4px)]',
    hit: 'rounded-[3px] border-y border-[#4a9c4e] bg-[repeating-linear-gradient(90deg,#478f4b_0_1px,#70d973_2px_4px,#60c063_7px)]',
    solid: 'bg-gradient-to-b from-[#7ce87f] to-[#62cb64]',
    slim: 'bg-[#6cd66c]',
  },
  blue: {
    wave: 'rounded-[3px] border border-[#5a74c9] bg-gradient-to-b from-[#7f98ec] to-[#6b83d6] text-white',
    short: 'rounded-[3px] border border-[#5a74c9] bg-gradient-to-b from-[#7b94e6] to-[#6a82d2] text-[#a6b0cc]',
    stripe: 'bg-[#7a93e8]',
    hit: 'bg-[#7a93e8]',
    solid: 'bg-[#7a93e8]',
    slim: 'rounded-[2px] border-x border-[#5f7ad0] bg-[#7d97ee]',
  },
};

function FadeCurve({ dir, slim }: { dir: 'in' | 'out'; slim: boolean }) {
  return (
    <svg viewBox="0 0 100 30" preserveAspectRatio="none" className="absolute inset-0 h-full w-full">
      <path
        d={dir === 'in' ? 'M0 29C35 29 65 1 100 1' : 'M0 1C40 1 50 29 100 29'}
        fill="none"
        stroke={dir === 'in' ? '#dcecff' : '#a9f5bd'}
        strokeWidth={slim ? 2 : 3}
        vectorEffect="non-scaling-stroke"
      />
    </svg>
  );
}

function AudioClipView({ clip, hue }: { clip: AudioClip; hue: 'green' | 'blue' }) {
  const hasIcon = clip.style === 'wave' || clip.style === 'short';
  return (
    <div
      className={clsx('absolute inset-y-0 flex items-center gap-[7px] overflow-hidden', hasIcon && 'pl-[2px]', CLIP_FILL[hue][clip.style])}
      style={{ left: left(clip.from), width: width(clip.from, clip.to) }}
    >
      {hasIcon && <SampleIcon className="h-4 w-[17px] shrink-0 drop-shadow-[1px_1px_0_#1f3a2c]" />}
      {clip.label && (
        <span
          className={clsx(
            'whitespace-nowrap pb-[2px] text-xl leading-7',
            clip.dim ? 'text-white/50' : 'text-[#f4fff4] [text-shadow:1px_1px_1px_#27472c]'
          )}
        >
          {clip.label}
        </span>
      )}
      {clip.cuts?.map((bar) => (
        <span
          key={bar}
          className="absolute inset-y-0 w-px bg-[#2c3a30]"
          style={{ left: `${((bar - clip.from) / (clip.to - clip.from)) * 100}%` }}
        />
      ))}
      {clip.fade && <FadeCurve dir={clip.fade} slim={clip.style === 'slim'} />}
    </div>
  );
}

function PatternRun({ run, group }: { run: Range; group: PatternRuns }) {
  const [from, to] = run;
  const cells = steps(from, to - 0.1, group.unit);
  return (
    <div
      className="absolute inset-y-0 flex flex-col overflow-hidden border-b-2 border-[#3c1218]"
      style={{ left: left(from), width: width(from, to) }}
    >
      <div className="flex h-[29px] shrink-0">
        {cells.map((bar, i) => {
          const length = Math.min(group.unit, to - bar);
          return (
            <div
              key={bar}
              className="flex min-w-0 basis-0 items-center gap-[6px] overflow-hidden rounded-[3px] border border-[#ad2119] bg-gradient-to-b from-[#d4392d] to-[#c43227] text-[#f2b0aa]"
              style={{ flexGrow: length }}
            >
              {length > 1 && <KeysIcon className="ml-[2px] h-[18px] w-4 shrink-0" />}
              {length === 1 && <NarrowKeysIcon />}
              {length < 1 && group.unit === 1 && <NarrowKeysIcon />}
              {group.labels && <span className="whitespace-nowrap pb-[2px] text-xl leading-6 text-white">{group.labels[i]}</span>}
            </div>
          );
        })}
      </div>
      <div className="relative flex-1 bg-[#6f2425]">
        <svg
          viewBox={`0 0 ${((to - from) / group.unit) * 16} 42`}
          preserveAspectRatio="none"
          className="absolute inset-x-0 top-0 h-[42px] w-full"
        >
          {steps(0, to - from - 0.1, 2).map((bar) => (
            <path key={bar} d={`M${(bar * 16) / group.unit} 0v42`} stroke="#581416" strokeWidth="2" vectorEffect="non-scaling-stroke" />
          ))}
          <path d={notesPath(group.notes, cells.length)} fill="#e57f77" opacity="0.9" />
        </svg>
      </div>
    </div>
  );
}

function Sliver({ range: [from, to] }: { range: Range }) {
  return (
    <div className="absolute inset-y-0 flex flex-col" style={{ left: left(from), width: width(from, to) }}>
      <div className="h-7 bg-[#d4372b]" />
      <svg viewBox="0 0 4 42" preserveAspectRatio="none" className="min-h-0 w-full flex-1 bg-[#70201f]">
        <path d="M4 4v34L1 22V18Z" fill="#ee8880" />
      </svg>
    </div>
  );
}

function TrackRow({ track }: { track: Track }) {
  const height = track.cut ? 'h-9' : track.tall ? 'h-[72px]' : 'h-8';
  const hue = track.hue === 'blue' ? 'blue' : 'green';
  return (
    <>
      <div className={clsx('flex overflow-hidden', height)}>
        <div className="w-[202px] shrink-0 bg-[#20282c]">
          <TrackHeader track={track} />
        </div>
        <div className="w-5 shrink-0 border-b-2 border-r-2 border-[#262e35] bg-[#39424a]" />
        <div className={clsx('relative min-w-0 flex-1 overflow-hidden', GRID)}>
          <div className="absolute inset-x-0 bottom-0 h-[2px] bg-[#1e2430]" />
          <div className="absolute inset-x-0 bottom-px top-0">
            {track.audio?.map((clip) => (
              <AudioClipView key={clip.from} clip={clip} hue={hue} />
            ))}
            {track.slivers?.map((range) => (
              <Sliver key={range[0]} range={range} />
            ))}
            {track.patterns?.map((group) =>
              group.runs.map((run) => <PatternRun key={run[0]} run={run} group={group} />)
            )}
            {track.muted?.map((bar) => (
              <div key={bar} className="absolute inset-y-0 flex flex-col" style={{ left: left(bar), width: width(bar, bar + 1) }}>
                <svg viewBox="0 0 14 29" preserveAspectRatio="none" className="h-[29px] w-full rounded-[3px] bg-[#4a434b]">
                  <path d="M3 5 10 14 3 24" fill="none" stroke="#6d686f" strokeWidth="2" />
                </svg>
                <div className="flex-1 bg-[#6f2425]" />
              </div>
            ))}
          </div>
        </div>
      </div>
      {track.automation && (
        <div className="flex h-2">
          <div className="w-[202px] shrink-0 bg-[#20282c] pr-[3px]">
            <div className="flex h-full overflow-hidden rounded-br-xl">
              <div className={clsx('w-3', HATCH)} />
              <div className={clsx('flex-1', track.automation.hue === 'plum' ? 'bg-[#70506a]' : 'bg-[#79724e]')} />
            </div>
          </div>
          <div className="w-5 shrink-0 border-b border-r-2 border-[#262e35] bg-[#39424a]" />
          <div className={clsx('relative min-w-0 flex-1 overflow-hidden', GRID)}>
            <div className="absolute inset-x-0 bottom-0 h-px bg-[#1e2430]" />
            {track.automation.runs.map(([a, b]) => (
              <div
                key={a}
                className={clsx('absolute bottom-px top-0 rounded-[2px]', LANE_FILL[track.automation!.hue])}
                style={{ left: left(a), width: width(a, b) }}
              />
            ))}
          </div>
        </div>
      )}
    </>
  );
}

function Arrangement() {
  return (
    <section className="flex min-w-0 flex-1 flex-col">
      <ArrangementHeader />
      <div className="flex border-b-2 border-[#262d30]">
        <div className="min-w-0 flex-1">
          {TRACKS.map((track, i) => (
            <TrackRow key={i} track={track} />
          ))}
        </div>
        <div className="flex w-[35px] shrink-0 flex-col border-l-[3px] border-[#20272a]">
          <div className="h-[67px] border-2 border-r-0 border-[#666e71] bg-[#52595c]" />
          <div className={clsx('flex-1 border-y-2 border-[#20272a]', HATCH)} />
          <button aria-label="Scroll down" className="flex h-[38px] items-center justify-center border-2 border-r-0 border-[#666e71] bg-[#52595c]">
            <ChevronIcon d={DOWN} />
          </button>
        </div>
      </div>
    </section>
  );
}

export default function App() {
  return (
    <div className="flex min-h-screen flex-col bg-[#42494c] font-['Open_Sans','Noto_Sans',sans-serif]">
      <ToolbarStrip />
      <div className="flex flex-1">
        <div className="flex w-[17px] flex-col items-center justify-center gap-1 border-r-2 border-[#30373a] bg-[#454c4f]">
          {[1, 2, 3, 4, 5].map((i) => (
            <span key={i} className="size-1 bg-[#2f3638]" />
          ))}
        </div>
        <main className="min-w-0 flex-1">
          <TitleBar />
          <div className="flex">
            <Picker />
            <Arrangement />
          </div>
        </main>
      </div>
    </div>
  );
}
